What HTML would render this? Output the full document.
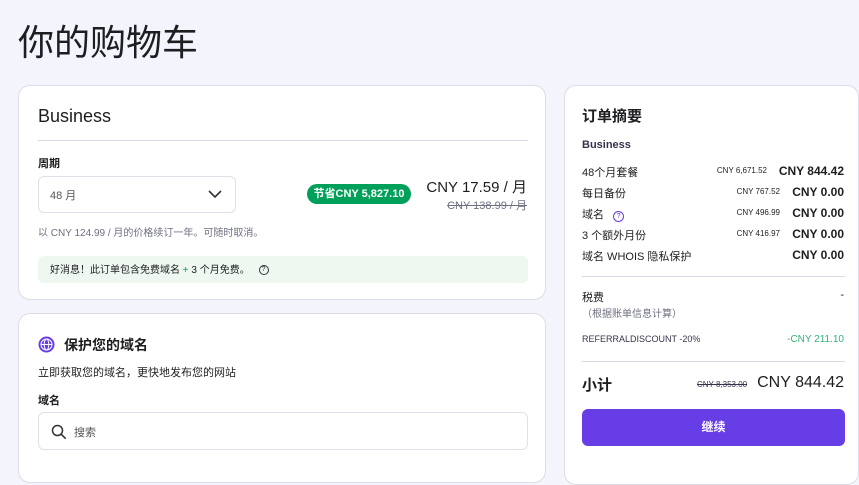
<!DOCTYPE html>
<html><head><meta charset="utf-8"><style>
*{margin:0;padding:0;box-sizing:border-box}
body{width:859px;height:463px;overflow:hidden;background:#f4f5fc;font-family:"Liberation Sans","Noto Sans CJK SC",sans-serif;color:#1d1e20;position:relative}
.a{position:absolute;white-space:nowrap}
.card{position:absolute;background:#fff;border:1px solid #dcdce6;border-radius:12px}
.s{text-decoration:line-through;color:#6d7081}
.row{position:absolute;left:17px;right:14px;font-size:11px;height:14px}
.row .l{position:absolute;left:0}
.row .v{position:absolute;right:0;font-weight:bold;font-size:12px}
.row .o{position:absolute;right:64px;font-size:8px;top:2px}
</style></head><body>
<div class="a" style="left:18px;top:14px;font-size:36px;color:#1d1e20">你的购物车</div>

<div class="card" style="left:18px;top:85px;width:528px;height:215px">
  <div class="a" style="left:19px;top:20px;font-size:18px">Business</div>
  <div class="a" style="left:19px;top:54px;width:490px;height:1px;background:#dadae2"></div>
  <div class="a" style="left:19px;top:69px;font-size:11px;font-weight:bold">周期</div>
  <div class="a" style="left:19px;top:90px;width:198px;height:37px;border:1px solid #e0e0e8;border-radius:6px"></div>
  <div class="a" style="left:31px;top:101px;font-size:11px;color:#555">48 月</div>
  <svg class="a" style="left:188px;top:102px" width="16" height="12" viewBox="0 0 16 12"><path d="M2 3l6 6 6-6" stroke="#333" stroke-width="1.6" fill="none"/></svg>
  <div class="a" style="left:288px;top:98px;width:104px;height:20px;border-radius:10px;background:#00a05a;color:#fff;font-size:11px;font-weight:bold;text-align:center;line-height:20px">节省CNY 5,827.10</div>
  <div class="a" style="right:18px;top:90px;font-size:15px">CNY 17.59 / 月</div>
  <div class="a s" style="right:18px;top:111px;font-size:11px">CNY 138.99 / 月</div>
  <div class="a" style="left:19px;top:138px;font-size:10px;color:#6d7081">以 CNY 124.99 / 月的价格续订一年。可随时取消。</div>
  <div class="a" style="left:19px;top:170px;width:490px;height:27px;background:#eef8f1;border-radius:6px"></div>
  <div class="a" style="left:31px;top:175px;font-size:10px">好消息！此订单包含免费域名 <span style="color:#00a05a">+</span> 3 个月免费。 <span style="display:inline-block;width:10px;height:10px;border:1.3px solid #333;border-radius:50%;font-size:7px;text-align:center;line-height:8px;margin-left:6px;vertical-align:middle">?</span></div>
</div>

<div class="card" style="left:18px;top:313px;width:528px;height:170px">
  <svg class="a" style="left:19px;top:22px" width="17" height="17" viewBox="0 0 17 17"><circle cx="8.5" cy="8.5" r="8" fill="#673de6"/><g stroke="#fff" stroke-width="1" fill="none"><circle cx="8.5" cy="8.5" r="5.5"/><ellipse cx="8.5" cy="8.5" rx="2.3" ry="5.5"/><path d="M3 8.5h11"/></g></svg>
  <div class="a" style="left:45px;top:21px;font-size:14px;font-weight:bold">保护您的域名</div>
  <div class="a" style="left:19px;top:50px;font-size:11px">立即获取您的域名，更快地发布您的网站</div>
  <div class="a" style="left:19px;top:78px;font-size:11px;font-weight:bold">域名</div>
  <div class="a" style="left:19px;top:98px;width:490px;height:38px;border:1px solid #e0e0e8;border-radius:6px"></div>
  <svg class="a" style="left:32px;top:110px" width="16" height="16" viewBox="0 0 16 16"><circle cx="6.5" cy="6.5" r="5" stroke="#333" stroke-width="1.5" fill="none"/><path d="M10.2 10.2l4.5 4.5" stroke="#333" stroke-width="1.6"/></svg>
  <div class="a" style="left:55px;top:110px;font-size:11px;color:#555">搜索</div>
</div>

<div class="card" style="left:564px;top:85px;width:295px;height:400px">
  <div class="a" style="left:17px;top:19px;font-size:15px;font-weight:bold">订单摘要</div>
  <div class="a" style="left:17px;top:53px;font-size:11px;font-weight:bold;color:#36344d">Business</div>
  <div class="row" style="top:78px"><span class="l">48个月套餐</span><span class="o" style="right:77px">CNY 6,671.52</span><span class="v">CNY 844.42</span></div>
  <div class="row" style="top:99px"><span class="l">每日备份</span><span class="o">CNY 767.52</span><span class="v">CNY 0.00</span></div>
  <div class="row" style="top:120px"><span class="l">域名 <span style="display:inline-block;width:11px;height:11px;border:1.3px solid #673de6;border-radius:50%;color:#673de6;font-size:7px;text-align:center;line-height:9px;margin-left:6px">?</span></span><span class="o">CNY 496.99</span><span class="v">CNY 0.00</span></div>
  <div class="row" style="top:141px"><span class="l">3 个额外月份</span><span class="o">CNY 416.97</span><span class="v">CNY 0.00</span></div>
  <div class="row" style="top:162px"><span class="l">域名 WHOIS 隐私保护</span><span class="v">CNY 0.00</span></div>
  <div class="a" style="left:17px;top:190px;width:263px;height:1px;background:#dadae2"></div>
  <div class="a" style="left:17px;top:203px;font-size:11px">税费</div>
  <div class="a" style="right:14px;top:203px;font-size:11px">-</div>
  <div class="a" style="left:17px;top:219px;font-size:10px;color:#6d7081">（根据账单信息计算）</div>
  <div class="a" style="left:17px;top:248px;font-size:9px;color:#36344d">REFERRALDISCOUNT -20%</div>
  <div class="a" style="right:14px;top:248px;font-size:10px;color:#00a05a;opacity:.8">-CNY 211.10</div>
  <div class="a" style="left:17px;top:275px;width:263px;height:1px;background:#dadae2"></div>
  <div class="a" style="left:17px;top:288px;font-size:15px;font-weight:bold">小计</div>
  <div class="a s" style="left:132px;top:294px;font-size:8px;color:#36344d">CNY 8,353.00</div>
  <div class="a" style="right:14px;top:288px;font-size:16px">CNY 844.42</div>
  <div class="a" style="left:17px;top:323px;width:263px;height:37px;background:#673de6;border-radius:6px;color:#fff;font-size:12px;font-weight:bold;text-align:center;line-height:37px">继续</div>
</div>
</body></html>
